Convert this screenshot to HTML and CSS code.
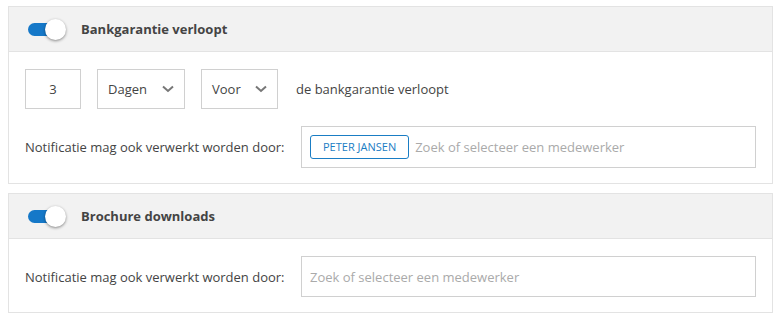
FILE: index.html
```html
<!DOCTYPE HTML>
<html lang="nl">
<head>
  <meta charset="UTF-8">
  <meta name="viewport" content="width=device-width, initial-scale=1.0">
  <title>Notificaties</title>
  <link rel="stylesheet" href="styles.css">
</head>
<body>
  <!-- Bankgarantie -->
  <div class="card">
    <div class="card-header">
      <span class="toggle"><span class="track"></span><span class="knob"></span></span>
      <h3>Bankgarantie verloopt</h3>
    </div>
    <div class="card-body">
      <div class="row">
        <div class="box num">3</div>
        <div class="box select days">Dagen <svg class="chev" viewBox="0 0 12 8"><path d="M1 1.5l5 4.5 5-4.5" fill="none" stroke="#777" stroke-width="2"/></svg></div>
        <div class="box select when">Voor <svg class="chev" viewBox="0 0 12 8"><path d="M1 1.5l5 4.5 5-4.5" fill="none" stroke="#777" stroke-width="2"/></svg></div>
        <span class="text">de bankgarantie verloopt</span>
      </div>
      <div class="row">
        <label class="label">Notificatie mag ook verwerkt worden door:</label>
        <div class="picker tall">
          <span class="tag">PETER JANSEN</span>
          <span class="placeholder">Zoek of selecteer een medewerker</span>
        </div>
      </div>
    </div>
  </div>

  <!-- Brochure -->
  <div class="card">
    <div class="card-header">
      <span class="toggle"><span class="track"></span><span class="knob"></span></span>
      <h3>Brochure downloads</h3>
    </div>
    <div class="card-body">
      <div class="row">
        <label class="label">Notificatie mag ook verwerkt worden door:</label>
        <div class="picker">
          <span class="placeholder">Zoek of selecteer een medewerker</span>
        </div>
      </div>
    </div>
  </div>
</body>
</html>
```

FILE: styles.css
```css
body {
  margin: 0;
  padding-top: 6px;
  font-family: 'Open Sans', sans-serif;
  font-size: 13px;
  color: #444;
  background: #fff;
}
.card {
  border: 1px solid #e3e3e3;
  margin: 0 9px 9px 8px;
}
.card-header {
  display: flex;
  align-items: center;
  height: 44px;
  padding: 0 19px;
  background: #f2f2f2;
  border-bottom: 1px solid #e3e3e3;
}
.card-header h3 {
  margin: 0 0 0 15px;
  font-size: 13px;
  font-weight: 700;
  color: #444;
}

/* toggle switch */
.toggle {
  position: relative;
  display: inline-block;
  width: 38px;
  height: 21px;
}
.toggle .track {
  position: absolute;
  left: 0;
  top: 4px;
  width: 30px;
  height: 13px;
  border-radius: 7px;
  background: #1578c8;
}
.toggle .knob {
  position: absolute;
  right: 0;
  top: 0;
  width: 21px;
  height: 21px;
  border-radius: 50%;
  background: #fff;
  box-shadow: 0 1px 3px rgba(0, 0, 0, 0.45);
}

.card-body {
  padding: 17px 16px 15px;
  display: flex;
  flex-direction: column;
  gap: 17px;
}
.row {
  display: flex;
  align-items: center;
}
.box {
  box-sizing: border-box;
  height: 40px;
  border: 1px solid #d0d0d0;
  display: flex;
  align-items: center;
  margin-right: 16px;
}
.num {
  width: 56px;
  justify-content: center;
}
.select {
  padding: 0 10px;
  justify-content: space-between;
}
.days { width: 88px; }
.when { width: 77px; }
.chev {
  width: 12px;
  height: 8px;
}
.text {
  margin-left: 2px;
}
.label {
  width: 276px;
}
.picker {
  box-sizing: border-box;
  flex: 1;
  height: 41px;
  border: 1px solid #d0d0d0;
  display: flex;
  align-items: center;
  padding: 0 8px;
}
.picker.tall {
  height: 42px;
}
.tag {
  box-sizing: border-box;
  height: 24px;
  line-height: 22px;
  padding: 0 12px;
  border: 1px solid #1a7dc4;
  border-radius: 3px;
  color: #1a7dc4;
  font-size: 11px;
  margin-right: 6px;
}
.placeholder {
  color: #aaa;
}
```
